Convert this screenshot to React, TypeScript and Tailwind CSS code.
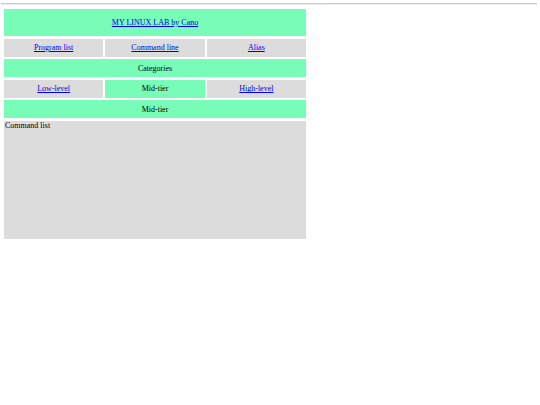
import React from "react";

const green = "bg-[#77fdb8]";
const gray = "bg-[#dcdcdc]";

function Link({ children }: { children: React.ReactNode }) {
  return <a href="#" className="text-[#0000ee] underline">{children}</a>;
}

export default function App() {
  return (
    <div className="w-[540px] h-[405px] bg-white text-[8px] leading-[9px] text-black" style={{ fontFamily: '"Liberation Serif", "Times New Roman", serif' }}>
      <div className="pt-[3px] px-[1px]">
        <div className="h-[2px] border-t border-[#c8c8c8] border-b border-b-[#eeeeee] w-[536px]" />
      </div>
      <div className="ml-[4px] mt-[4px] w-[302px] flex flex-col gap-[2.6px]">
        <div className={`${green} h-[27px] flex items-center justify-center`}>
          <Link>MY LINUX LAB by Cano</Link>
        </div>
        <div className="grid grid-cols-3 gap-[2px] h-[18px]">
          <div className={`${gray} flex items-center justify-center`}><Link>Program list</Link></div>
          <div className={`${gray} flex items-center justify-center`}><Link>Command line</Link></div>
          <div className={`${gray} flex items-center justify-center`}><Link>Alias</Link></div>
        </div>
        <div className={`${green} h-[18px] flex items-center justify-center`}>Categories</div>
        <div className="grid grid-cols-3 gap-[2px] h-[18px]">
          <div className={`${gray} flex items-center justify-center`}><Link>Low-level</Link></div>
          <div className={`${green} flex items-center justify-center`}>Mid-tier</div>
          <div className={`${gray} flex items-center justify-center`}><Link>High-level</Link></div>
        </div>
        <div className={`${green} h-[18px] flex items-center justify-center`}>Mid-tier</div>
        <div className={`${gray} h-[118px] pl-[1px]`}>Command list</div>
      </div>
    </div>
  );
}
